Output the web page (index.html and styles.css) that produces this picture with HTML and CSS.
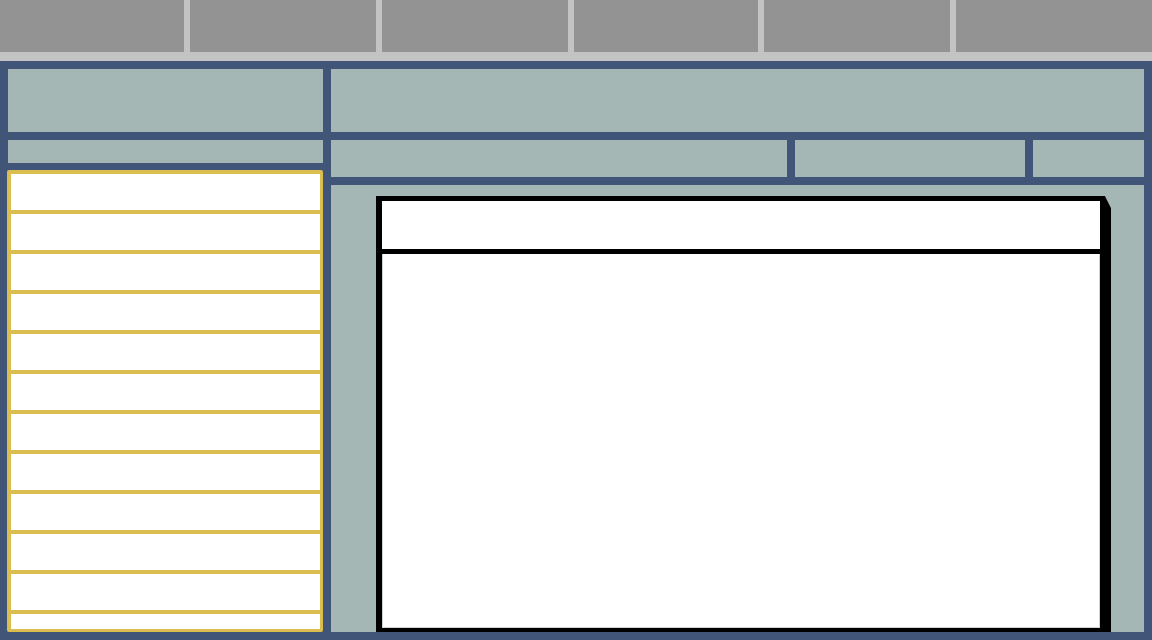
FILE: index.html
```html
<!DOCTYPE html>
<html lang="en">
<head>
<meta charset="utf-8">
<title>Layout</title>
<link rel="stylesheet" href="styles.css">
</head>
<body>
<div class="tabs">
  <div class="tab t1"></div>
  <div class="tab t2"></div>
  <div class="tab t2"></div>
  <div class="tab t1"></div>
  <div class="tab t2"></div>
  <div class="tab t6"></div>
</div>
<div class="frame">
  <div class="col-left">
    <div class="cell top"></div>
    <div class="cell sub-left"></div>
    <div class="list">
      <div class="row"></div><div class="row"></div><div class="row"></div>
      <div class="row"></div><div class="row"></div><div class="row"></div>
      <div class="row"></div><div class="row"></div><div class="row"></div>
      <div class="row"></div><div class="row"></div><div class="row"></div>
    </div>
  </div>
  <div class="col-right">
    <div class="cell top"></div>
    <div class="sub-right">
      <div class="cell seg-a"></div>
      <div class="cell seg-b"></div>
      <div class="cell seg-c"></div>
    </div>
    <div class="cell content">
      <div class="dialog">
        <div class="dialog-head"></div>
        <div class="dialog-body"></div>
      </div>
    </div>
  </div>
</div>
</body>
</html>
```

FILE: styles.css
```css
html, body {
  margin: 0;
  padding: 0;
}
body {
  width: 1152px;
  height: 640px;
  overflow: hidden;
  background: #c3c3c3;
  font-family: "Liberation Sans", Arial, sans-serif;
}
.tabs {
  display: flex;
  gap: 6px;
  height: 52px;
  padding-bottom: 9px;
  background: #c3c3c3;
}
.tab {
  background: #939393;
  height: 52px;
}
.t1 { width: 184px; }
.t2 { width: 186px; }
.t6 { width: 196px; }

.frame {
  display: flex;
  gap: 8px;
  height: 563px;
  padding: 8px;
  background: #405577;
}
.cell {
  background: #a5b7b5;
}
.col-left {
  width: 315px;
  display: flex;
  flex-direction: column;
}
.col-right {
  width: 813px;
  display: flex;
  flex-direction: column;
}
.top {
  height: 63px;
  margin-bottom: 8px;
}
.sub-left {
  height: 23px;
  margin-bottom: 7px;
}
.list {
  margin-left: -1px;
  width: 309px;
  height: 455px;
  border-style: solid;
  border-color: #dbbe50;
  border-width: 4px 3px 3px 4px;
  border-radius: 2px;
  background: #ffffff;
  overflow: hidden;
}
.row {
  height: 36px;
  border-bottom: 4px solid #dbbe50;
}
.sub-right {
  display: flex;
  gap: 8px;
  height: 37px;
  margin-bottom: 8px;
}
.seg-a { width: 456px; }
.seg-b { width: 230px; }
.seg-c { width: 111px; }
.content {
  height: 436px;
  padding: 11px 0 0 45px;
  overflow: hidden;
}
.dialog {
  width: 718px;
  height: 427px;
  border-style: solid;
  border-color: #000000;
  border-width: 5px 11px 4px 6px;
  background: #ffffff;
  display: flex;
  flex-direction: column;
  clip-path: polygon(0 0, calc(100% - 6px) 0, 100% 12px, 100% 100%, 0 100%);
}
.dialog-head {
  height: 48px;
  border-bottom: 5px solid #000000;
}
.dialog-body {
  flex: 1;
  border: 1px solid #d2d2d2;
  border-top: none;
}
```
